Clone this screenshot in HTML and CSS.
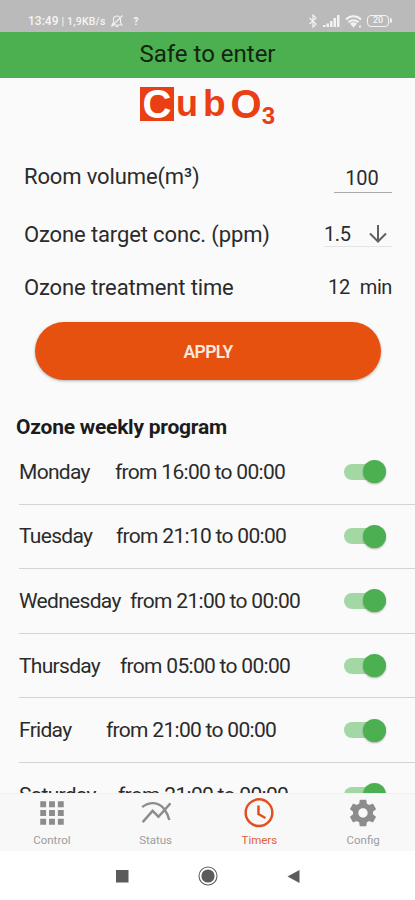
FILE: index.html
```html
<!DOCTYPE html>
<html lang="en">
<head>
    <meta charset="UTF-8">
    <meta name="viewport" content="width=device-width, initial-scale=1.0">
    <title>CubO3 - Timers</title>
    <link rel="stylesheet" href="styles.css">
</head>
<body>
    <div class="status-bar">
        <div class="status-left">
            <span class="clock">13:49</span>
            <span class="speed">| 1,9KB/s</span>
            <svg class="mute" width="14" height="14" viewBox="0 0 14 14" fill="none" stroke="#f2f2f2" stroke-width="1.1">
                <path d="M2 11h10L10.500 8.500V5.500a3.500 3.500 0 0 0-7 0v3zM5.500 12.500h3M12.500 1.500L1.500 12.500"/>
            </svg>
            <span class="hint">?</span>
        </div>
        <div class="status-right">
            <svg width="10" height="14" viewBox="0 0 10 14" fill="none" stroke="#f2f2f2" stroke-width="1.2">
                <path d="M1.500 4l6.500 6-3 3V1l3 3-6.500 6"/>
            </svg>
            <svg width="17" height="12" viewBox="0 0 17 12" fill="#f2f2f2">
                <path d="M0 10h2.500v2H0zM3.500 8.500H6V12H3.500zM7 6h2.500v6H7zM10.500 3H13v9h-2.500zM14 0h2.500v12H14z"/>
            </svg>
            <svg width="17" height="13" viewBox="0 0 17 13" fill="none" stroke="#f2f2f2" stroke-width="2">
                <path d="M1 4.500a10.500 10.500 0 0 1 15 0M3.500 7.300a7 7 0 0 1 10 0"/>
                <path d="M5 8.800a5 5 0 0 1 7 0L8.500 12.500z" fill="#f2f2f2" stroke="none"/>
                <path d="M14 11.500h2"/>
            </svg>
            <div class="battery">20</div>
        </div>
    </div>

    <div class="banner">Safe to enter</div>

    <main class="content">
        <div class="logo">
            <span class="logo-c">C</span>
            <span class="logo-u">u</span>
            <span class="logo-b">b</span>
            <span class="logo-o">O</span>
            <span class="logo-3">3</span>
        </div>

        <div class="setting volume">
            <span class="label">Room volume(m³)</span>
            <span class="field">100</span>
        </div>
        <div class="setting conc">
            <span class="label">Ozone target conc. (ppm)</span>
            <div class="select">
                <span>1.5</span>
                <svg width="20" height="20" viewBox="0 0 20 20" fill="none" stroke="#606060" stroke-width="2">
                    <path d="M10 1v17M2 9.500l8 8 8-8"/>
                </svg>
            </div>
        </div>
        <div class="setting time">
            <span class="label">Ozone treatment time</span>
            <span class="result"><span>12</span><span>min</span></span>
        </div>

        <button class="apply">APPLY</button>

        <h2>Ozone weekly program</h2>
        <div class="days">
            <div class="day"><span class="name mon">Monday</span><span class="range">from 16:00 to 00:00</span><i class="switch"></i></div>
            <div class="day"><span class="name tue">Tuesday</span><span class="range">from 21:10 to 00:00</span><i class="switch"></i></div>
            <div class="day"><span class="name wed">Wednesday</span><span class="range">from 21:00 to 00:00</span><i class="switch"></i></div>
            <div class="day"><span class="name thu">Thursday</span><span class="range">from 05:00 to 00:00</span><i class="switch"></i></div>
            <div class="day"><span class="name fri">Friday</span><span class="range">from 21:00 to 00:00</span><i class="switch"></i></div>
            <div class="day"><span class="name sat">Saturday</span><span class="range">from 21:00 to 00:00</span><i class="switch"></i></div>
        </div>
    </main>

    <nav class="tabs">
        <div class="tab">
            <svg width="30" height="30" viewBox="0 0 30 30" fill="#8c8c8c">
                <path d="M4 4h5.500v5.500H4zM12.250 4h5.500v5.500h-5.500zM20.500 4H26v5.500h-5.500zM4 12.250h5.500v5.500H4zM12.250 12.250h5.500v5.500h-5.500zM20.500 12.250H26v5.500h-5.500zM4 20.500h5.500V26H4zM12.250 20.500h5.500V26h-5.500zM20.500 20.500H26V26h-5.500z"/>
            </svg>
            <span>Control</span>
        </div>
        <div class="tab">
            <svg width="30" height="30" viewBox="0 0 30 30" fill="none" stroke="#8c8c8c" stroke-width="2.300">
                <path d="M2.500 23.500l9.300-10.500 5.500 5.500L28.500 6"/>
                <path d="M2 9.500C8.500 4.500 17 4 22.500 11c2.500 3.500 4 6.500 5 10.500"/>
            </svg>
            <span>Status</span>
        </div>
        <div class="tab active">
            <svg width="30" height="30" viewBox="0 0 30 30" fill="none" stroke="#e0501f" stroke-width="2.300">
                <circle cx="15" cy="14.700" r="12.500"/>
                <path d="M14.500 8v8l6.500 3.700"/>
            </svg>
            <span>Timers</span>
        </div>
        <div class="tab">
            <svg width="32" height="32" viewBox="0 0 24 24" fill="#8c8c8c">
                <path d="M19.430 12.980c.04-.32.07-.64.07-.98s-.03-.66-.07-.98l2.110-1.650c.19-.15.24-.42.12-.64l-2-3.460c-.12-.22-.39-.3-.61-.22l-2.490 1c-.52-.4-1.080-.73-1.690-.98l-.38-2.650C14.460 2.180 14.250 2 14 2h-4c-.25 0-.46.18-.49.42l-.38 2.650c-.61.25-1.170.59-1.690.98l-2.490-1c-.23-.09-.49 0-.61.22l-2 3.460c-.13.22-.07.49.12.64l2.110 1.650c-.04.32-.07.65-.07.98s.03.66.07.98l-2.110 1.650c-.19.15-.24.42-.12.64l2 3.460c.12.22.39.3.61.22l2.490-1c.52.4 1.080.73 1.690.98l.38 2.650c.03.24.24.42.49.42h4c.25 0 .46-.18.49-.42l.38-2.650c.61-.25 1.170-.59 1.690-.98l2.490 1c.23.09.49 0 .61-.22l2-3.460c.12-.22.07-.49-.12-.64l-2.110-1.650zM12 15.500c-1.930 0-3.500-1.570-3.500-3.500s1.570-3.500 3.500-3.500 3.500 1.570 3.500 3.500-1.570 3.500-3.500 3.500z"/>
            </svg>
            <span>Config</span>
        </div>
    </nav>

    <div class="system-nav">
        <svg width="20" height="20" viewBox="0 0 20 20"><path d="M4 4h12.500v12.500H4z" fill="#5b5b5b"/></svg>
        <svg width="20" height="20" viewBox="0 0 20 20">
            <circle cx="10" cy="10" r="9" fill="none" stroke="#606060" stroke-width="1.100"/>
            <circle cx="10" cy="10" r="6.600" fill="#5b5b5b"/>
        </svg>
        <svg width="20" height="20" viewBox="0 0 20 20"><path d="M15.500 4v13L3.500 10.500z" fill="#5b5b5b"/></svg>
    </div>
</body>
</html>
```

FILE: styles.css
```css
:root {
    --green: #4caf50;
    --orange: #e65110;
    --red: #ea3e14;
    --text: #2b2b2b;
}

* {
    box-sizing: border-box;
}

body {
    margin: 0;
    width: 415px;
    height: 900px;
    overflow: hidden;
    display: flex;
    flex-direction: column;
    font-family: Roboto, "Liberation Sans", sans-serif;
    color: var(--text);
    background-color: #fafafa;
}

.status-bar {
    flex: none;
    height: 32px;
    padding: 11px 24px 0 28px;
    display: flex;
    justify-content: space-between;
    background-color: #bababa;
    color: #f5f5f5;
}

.status-left,
.status-right {
    display: flex;
    align-items: center;
    height: 20px;
}

.clock {
    font-size: 12px;
    font-weight: 500;
}

.speed {
    margin-left: 3px;
    font-size: 10.5px;
    font-weight: 500;
    letter-spacing: 0.2px;
}

.mute {
    margin-left: 4px;
}

.hint {
    margin-left: 10px;
    font-size: 10px;
    font-weight: 700;
}

.status-right {
    gap: 5px;
}

.battery {
    position: relative;
    width: 22px;
    height: 12px;
    margin-right: 2px;
    border: 1.5px solid #f2f2f2;
    border-radius: 4px;
    font-size: 9px;
    font-weight: 500;
    line-height: 9px;
    text-align: center;
}

/* battery tip */
.battery::after {
    content: "";
    position: absolute;
    top: 2px;
    right: -4px;
    width: 2px;
    height: 5px;
    border-radius: 0 2px 2px 0;
    background-color: #f2f2f2;
}

.banner {
    flex: none;
    height: 46px;
    line-height: 45px;
    text-align: center;
    font-size: 24px;
    color: #10260f;
    background-color: var(--green);
}

.content {
    flex: 1;
    min-height: 0;
    overflow: hidden;
}

.logo {
    display: flex;
    height: 50px;
    padding: 9px 0 0 140px;
    font-family: "Liberation Sans", Arial, sans-serif;
    font-weight: 700;
    font-size: 41px;
    line-height: 34px;
    color: var(--red);
}

.logo-c {
    width: 34px;
    height: 34px;
    text-align: center;
    font-size: 40px;
    color: #fff;
    background-color: var(--red);
}

.logo-u {
    margin-left: 2px;
    font-size: 36px;
}

.logo-b {
    margin-left: 5px;
    font-size: 37px;
}

.logo-o {
    margin-left: 5px;
    font-size: 40px;
}

.logo-3 {
    padding-top: 12px;
    font-size: 24px;
}

.setting {
    display: flex;
    justify-content: space-between;
    align-items: center;
    padding: 0 23px 0 24px;
}

.label {
    font-size: 22px;
    letter-spacing: -0.13px;
}

.volume {
    height: 97px;
}

.field {
    width: 58px;
    height: 33px;
    line-height: 36px;
    text-align: center;
    padding-right: 2px;
    font-size: 20px;
    border-bottom: 1px solid #aaa;
}

.conc {
    height: 18px;
}

.select {
    display: flex;
    justify-content: space-between;
    align-items: center;
    width: 68px;
    padding-right: 4px;
    font-size: 20px;
    letter-spacing: -0.4px;
    border-bottom: 1px solid #e4e4e4;
}

.time {
    height: 88px;
}

.result {
    display: flex;
    gap: 10px;
    font-size: 20px;
    letter-spacing: -0.4px;
}

.apply {
    display: block;
    width: 346px;
    height: 58px;
    margin: -9px 0 0 35px;
    padding: 2px 0 0;
    border: none;
    border-radius: 29px;
    background-color: var(--orange);
    box-shadow: 0 1px 3px rgba(0, 0, 0, 0.3);
    color: #fbe9df;
    font-family: inherit;
    font-size: 17.5px;
    font-weight: 600;
    letter-spacing: -0.6px;
}

h2 {
    margin: 34px 0 0 16px;
    font-size: 21px;
    line-height: 26px;
    font-weight: 700;
    letter-spacing: -0.24px;
    color: #1c1c1c;
}

.days {
    padding-left: 19px;
}

.day {
    display: flex;
    align-items: center;
    height: 64.6px;
    padding-right: 29px;
    border-bottom: 1.5px solid #d4d4d4;
    font-size: 21px;
    letter-spacing: -0.7px;
}

.range {
    flex: 1;
}

.mon { width: 96px; }
.tue { width: 97px; }
.wed { width: 111px; }
.thu { width: 101px; }
.fri { width: 87px; }
.sat { width: 99px; }

.switch {
    display: flex;
    align-items: center;
    justify-content: flex-end;
    width: 42px;
    height: 16px;
    border-radius: 8px;
    background-color: #a3d8a5;
}

.switch::before {
    content: "";
    width: 23px;
    height: 23px;
    flex: none;
    border-radius: 50%;
    background-color: var(--green);
    box-shadow: 0 1px 2px rgba(0, 0, 0, 0.3);
}

.tabs {
    flex: none;
    display: grid;
    grid-template-columns: repeat(4, 1fr);
    height: 58px;
    border-top: 1px solid #f0f0f0;
    background-color: #f8f8f8;
}

.tab {
    display: flex;
    flex-direction: column;
    align-items: center;
    font-size: 11.5px;
    color: #9c9c9c;
}

.tab svg {
    width: 32px;
    height: 32px;
    margin-top: 3px;
}

.tab span {
    margin-top: 4px;
    line-height: 14px;
}

.tab.active {
    color: #e0623a;
}

.system-nav {
    flex: none;
    display: flex;
    justify-content: center;
    align-items: center;
    gap: 66px;
    height: 49px;
    background-color: #fff;
}
```
